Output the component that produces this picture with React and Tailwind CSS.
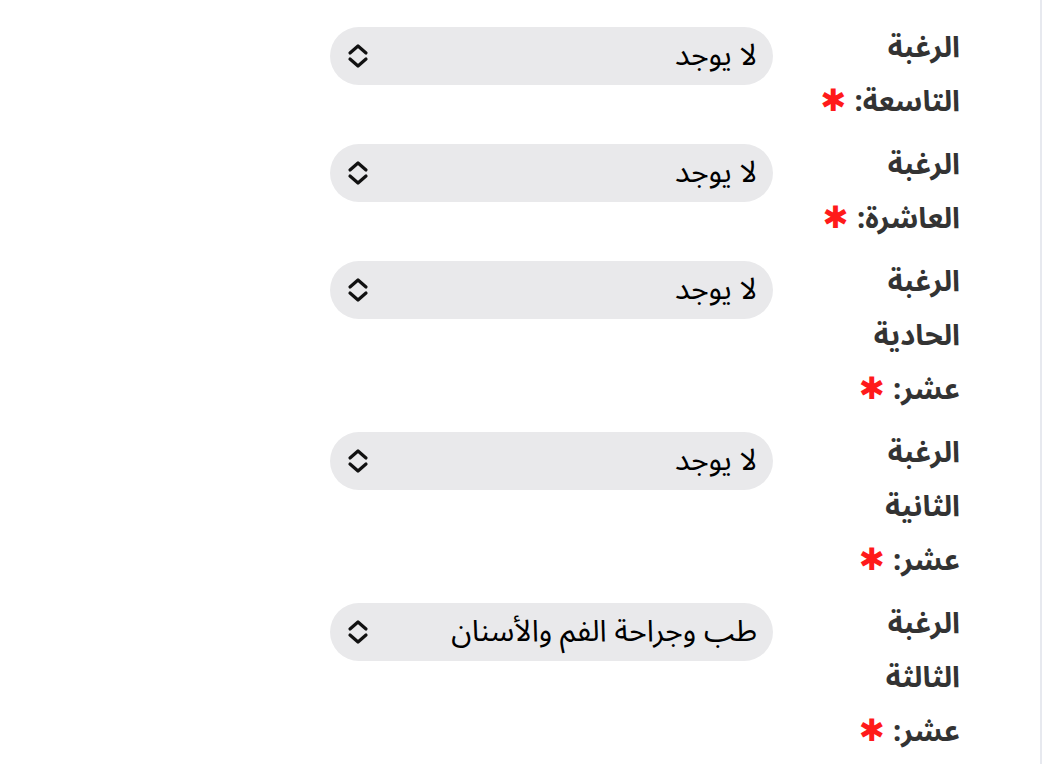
import React from "react";

const rows = [
  { lines: ["الرغبة", "التاسعة:"], value: "لا يوجد" },
  { lines: ["الرغبة", "العاشرة:"], value: "لا يوجد" },
  { lines: ["الرغبة", "الحادية", "عشر:"], value: "لا يوجد" },
  { lines: ["الرغبة", "الثانية", "عشر:"], value: "لا يوجد" },
  { lines: ["الرغبة", "الثالثة", "عشر:"], value: "طب وجراحة الفم والأسنان" },
];

function Chevron() {
  return (
    <svg width="24" height="26" viewBox="0 0 24 26" fill="none" stroke="#111" strokeWidth="3.2" strokeLinecap="round" strokeLinejoin="round">
      <path d="M4 10 L12 3 L20 10" />
      <path d="M4 16 L12 23 L20 16" />
    </svg>
  );
}

export default function App() {
  return (
    <div className="w-[1044px] h-[764px] bg-white overflow-hidden" style={{ fontFamily: '"Noto Sans Arabic", "DejaVu Sans", sans-serif' }}>
      <div className="w-[1042px] h-full border-r-2 border-[#e7e9ef]">
        <div dir="rtl" className="flex flex-col gap-[9px] pt-[21px] pr-[80px]">
          {rows.map((r, i) => (
            <div key={i} className="flex items-start gap-[17px]">
              <div className="w-[170px] shrink-0 text-[29px] font-bold leading-[54px] text-[#333] whitespace-nowrap">
                {r.lines.map((l, j) => (
                  <div key={j} className="h-[54px]">
                    {l}
                    {j === r.lines.length - 1 && <span className="text-[#ff1a1a] text-[31px] leading-none"> ✱</span>}
                  </div>
                ))}
              </div>
              <div className="mt-[6px] w-[443px] h-[58px] rounded-full bg-[#e9e9eb] flex items-center justify-between pr-[16px] pl-[16px]">
                <span className="text-[30px] leading-none text-black">{r.value}</span>
                <Chevron />
              </div>
            </div>
          ))}
        </div>
      </div>
    </div>
  );
}
